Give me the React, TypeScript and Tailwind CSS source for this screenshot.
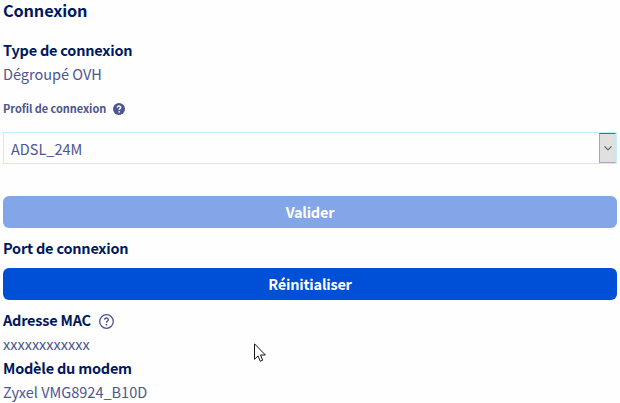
import type { ReactNode } from 'react';

function Label({ children }: { children: ReactNode }) {
  return (
    <dt className="flex h-6 items-center text-[14.5px] leading-6 font-bold tracking-[-0.22px] text-[#00185e]">
      {children}
    </dt>
  );
}

function Value({ children }: { children: ReactNode }) {
  return <dd className="h-6 text-[14.5px] leading-[23px]">{children}</dd>;
}

function SolidHelp() {
  return (
    <svg className="mt-px ml-[7px] size-3" viewBox="0 0 12 12" fill="none">
      <circle cx="6" cy="6" r="6" fill="#4d5592" />
      <path d="M4.3 4.7C4.3 2.4 7.8 2.6 7.7 4.6C7.6 5.7 6.1 5.7 6.1 7" stroke="#fff" strokeWidth="1.4" />
      <circle cx="6.1" cy="8.8" r="0.9" fill="#fff" />
    </svg>
  );
}

function OutlineHelp() {
  return (
    <svg className="mt-[2px] ml-2 size-[15px]" viewBox="0 0 15 15" fill="none">
      <circle cx="7.5" cy="7.5" r="6.8" stroke="#4d5592" strokeWidth="1.3" />
      <path d="M5.6 5.8C5.7 3.4 9.4 3.6 9.3 5.7C9.2 7.1 7.5 7 7.5 8.7" stroke="#4d5592" strokeWidth="1.4" />
      <circle cx="7.5" cy="10.7" r="0.9" fill="#4d5592" />
    </svg>
  );
}

export default function App() {
  return (
    <main className="relative h-[403px] w-[620px] overflow-hidden bg-[#fdfefd] px-[3px] font-['Noto_Sans_CJK_SC','Noto_Sans',sans-serif] text-[#4d5592]">
      <h2 className="h-[38px] text-[16.3px] leading-[21px] font-bold tracking-[-0.15px] text-[#00185e]">Connexion</h2>
      <dl>
        <Label>Type de connexion</Label>
        <Value>Dégroupé OVH</Value>
      </dl>
      <div className="mt-[10px] flex h-6 items-center text-[11px] font-bold tracking-[-0.06px]">
        Profil de connexion
        <SolidHelp />
      </div>
      <div className="mt-3 flex h-8 border border-[#bff1fe]">
        <span className="flex-1 pl-[7px] text-[14.5px] leading-8">ADSL_24M</span>
        <span className="flex h-[30px] w-[17px] items-center justify-center border border-t-[#666] border-r-[#dfe0dd] border-b-[#aaa] border-l-[#aaa] bg-[#e0e1de]">
          <svg className="size-2" viewBox="0 0 8 8" fill="none" stroke="#555" strokeWidth="1.1">
            <path d="M0.5 2.3L4 5.8L7.5 2.3" />
          </svg>
        </span>
      </div>
      <button className="mt-8 block h-8 w-full rounded-md bg-[#82a6e8] text-center text-[14.5px] leading-8 font-bold tracking-[-0.22px] text-white">
        Valider
      </button>
      <dl className="mt-2">
        <Label>Port de connexion</Label>
      </dl>
      <button className="mt-2 block h-8 w-full rounded-md bg-[#0050d7] text-center text-[14.5px] leading-8 font-bold tracking-[-0.22px] text-white">
        Réinitialiser
      </button>
      <dl className="mt-2">
        <Label>
          Adresse MAC
          <OutlineHelp />
        </Label>
        <Value>xxxxxxxxxxxx</Value>
        <Label>Modèle du modem</Label>
        <Value>Zyxel VMG8924_B10D</Value>
      </dl>
      <svg className="absolute top-[343px] left-[254px] h-[19px] w-3" viewBox="0 0 12 19">
        <path d="M0.5 0.8V16.3L4 12.9L6.3 18.2L8.7 17.2L6.5 12H11.4Z" fill="#fff" stroke="#15151f" strokeWidth="1" />
      </svg>
    </main>
  );
}
